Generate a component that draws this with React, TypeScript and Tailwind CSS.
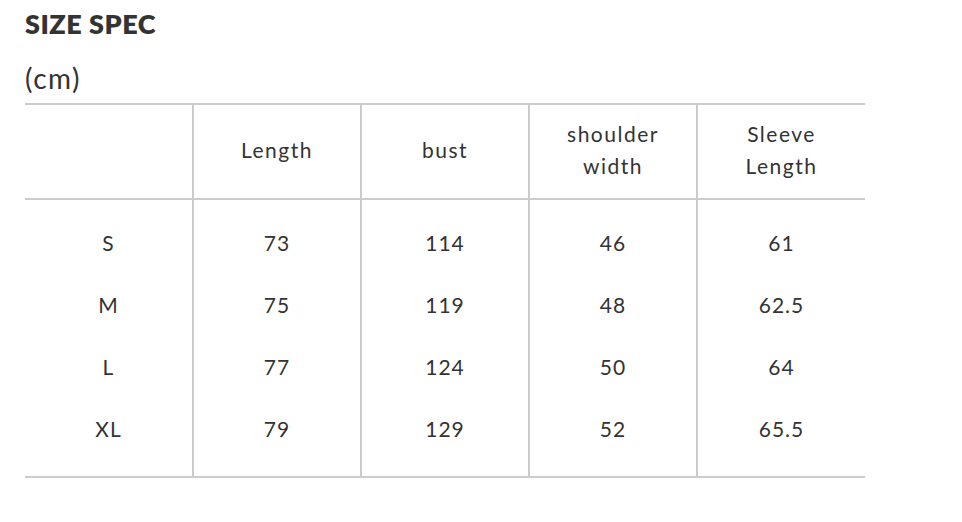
const headers = [['Length'], ['bust'], ['shoulder', 'width'], ['Sleeve', 'Length']];

const rows = [
  ['S', '73', '114', '46', '61'],
  ['M', '75', '119', '48', '62.5'],
  ['L', '77', '124', '50', '64'],
  ['XL', '79', '129', '52', '65.5'],
];

export default function App() {
  return (
    <div className="min-h-screen bg-white pl-[25px] text-[#333] font-['Lato',sans-serif]">
      <h1 className="pt-[8px] text-[27px] leading-[32px] font-extrabold tracking-[0.5px]">SIZE SPEC</h1>
      <p className="mt-[22px] text-[28px] leading-[32px] tracking-[1.5px]">(cm)</p>

      <div className="mt-[9px] w-[840px] border-t-2 border-b-2 border-[#cccccc]">
        <div className="grid grid-cols-[169px_168px_168px_168px_1fr] h-[95px] border-b-2 border-[#cccccc]">
          <div className="border-r-2 border-[#cccccc]" />
          {headers.map((h, i) => (
            <div
              key={i}
              className={`flex flex-col items-center justify-center pb-[4px] text-[21px] leading-[32px] tracking-[1.5px] ${i < 3 ? 'border-r-2 border-[#cccccc]' : ''}`}
            >
              {h.map((line) => (
                <span key={line}>{line}</span>
              ))}
            </div>
          ))}
        </div>

        <div className="grid grid-cols-[169px_168px_168px_168px_1fr]">
          {[0, 1, 2, 3, 4].map((c) => (
            <div
              key={c}
              className={`flex flex-col pt-[12px] pb-[16px] ${c < 4 ? 'border-r-2 border-[#cccccc]' : ''}`}
            >
              {rows.map((r) => (
                <div key={r[0]} className="h-[62px] flex items-center justify-center text-[21px] tracking-[1px]">
                  {r[c]}
                </div>
              ))}
            </div>
          ))}
        </div>
      </div>
    </div>
  );
}
